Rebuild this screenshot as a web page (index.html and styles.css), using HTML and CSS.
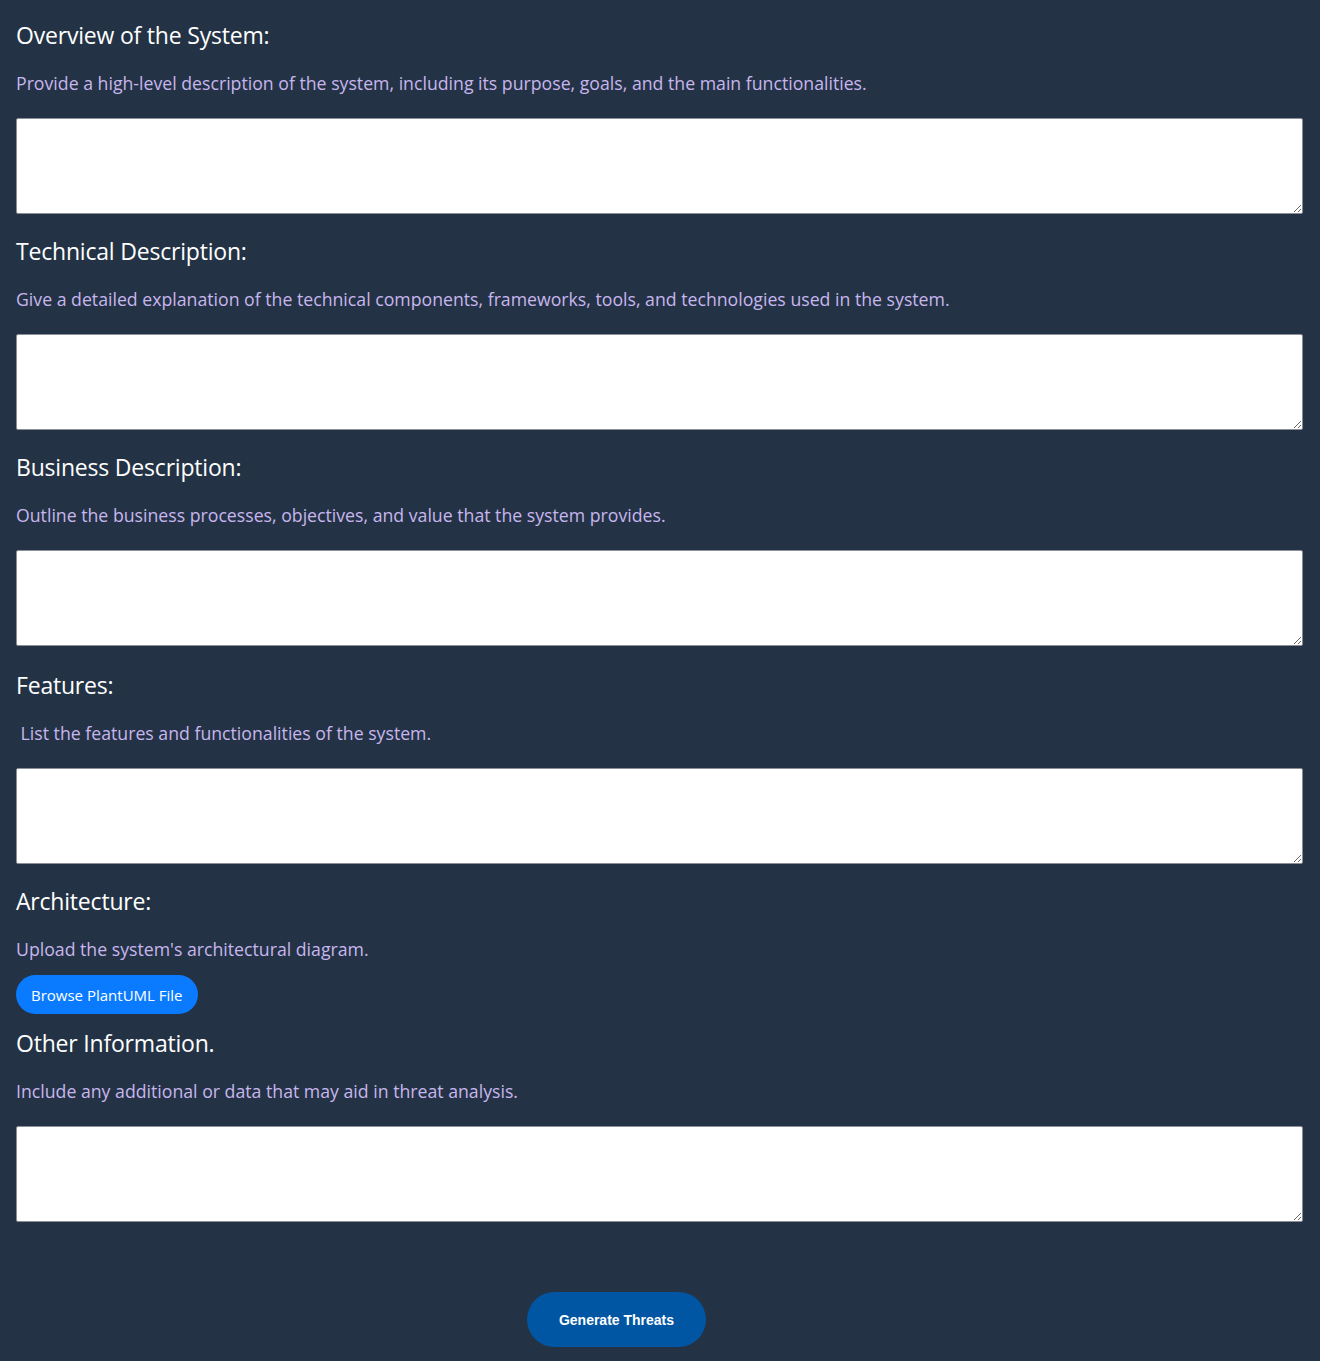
FILE: index.html
```html
<!DOCTYPE html>
<html lang="en">
<head>
<meta charset="utf-8">
<title>Threat Modeling Form</title>
<link rel="stylesheet" href="styles.css">
</head>
<body>
<form class="form">
  <section class="field">
    <h2 class="label">Overview of the System:</h2>
    <p class="hint">Provide a high-level description of the system, including its purpose, goals, and the main functionalities.</p>
    <textarea class="input"></textarea>
  </section>
  <section class="field">
    <h2 class="label">Technical Description:</h2>
    <p class="hint">Give a detailed explanation of the technical components, frameworks, tools, and technologies used in the system.</p>
    <textarea class="input"></textarea>
  </section>
  <section class="field">
    <h2 class="label">Business Description:</h2>
    <p class="hint">Outline the business processes, objectives, and value that the system provides.</p>
    <textarea class="input"></textarea>
  </section>
  <section class="field field-features">
    <h2 class="label">Features:</h2>
    <p class="hint">&nbsp;List the features and functionalities of the system.</p>
    <textarea class="input"></textarea>
  </section>
  <section class="field">
    <h2 class="label">Architecture:</h2>
    <p class="hint">Upload the system's architectural diagram.</p>
    <button type="button" class="browse">Browse PlantUML File</button>
  </section>
  <section class="field field-other">
    <h2 class="label">Other Information.</h2>
    <p class="hint">Include any additional or data that may aid in threat analysis.</p>
    <textarea class="input"></textarea>
  </section>
  <div class="actions">
    <button type="button" class="generate">Generate Threats</button>
  </div>
</form>
</body>
</html>
```

FILE: styles.css
```css
html, body {
  margin: 0;
  padding: 0;
  background: #233345;
}
body {
  font-family: "Open Sans", "Noto Sans", sans-serif;
  height: 1361px;
  overflow: hidden;
}
.form {
  padding: 21px 17px 0 16px;
}
.field {
  margin-bottom: 23px;
}
.field-features {
  padding-top: 2px;
}
.label {
  margin: 0;
  font-size: 23px;
  font-weight: 400;
  line-height: 29px;
  color: #ffffff;
  letter-spacing: -0.2px;
}
.hint {
  margin: 20px 0 0 0;
  font-size: 17.7px;
  line-height: 27px;
  color: #c8b6ee;
  letter-spacing: 0;
}
.input {
  display: block;
  box-sizing: border-box;
  width: 100%;
  height: 96px;
  margin: 21px 0 0 0;
  border: 1px solid #8a8f96;
  border-radius: 2px;
  background: #ffffff;
  resize: vertical;
}
.browse {
  display: block;
  margin-top: 12px;
  height: 39px;
  padding: 0 15px;
  border: none;
  border-radius: 20px;
  background: #0a7bff;
  color: #ffffff;
  font-family: "Open Sans", "Noto Sans", sans-serif;
  font-size: 15px;
  letter-spacing: 0;
}
.field-other {
  margin-top: -8px;
}
.actions {
  padding: 47px 0 0 511px;
}
.generate {
  width: 179px;
  height: 55px;
  border: none;
  border-radius: 28px;
  background: #0056a3;
  color: #ffffff;
  font-family: "Liberation Sans", Arial, sans-serif;
  font-weight: 700;
  font-size: 14px;
}
```
